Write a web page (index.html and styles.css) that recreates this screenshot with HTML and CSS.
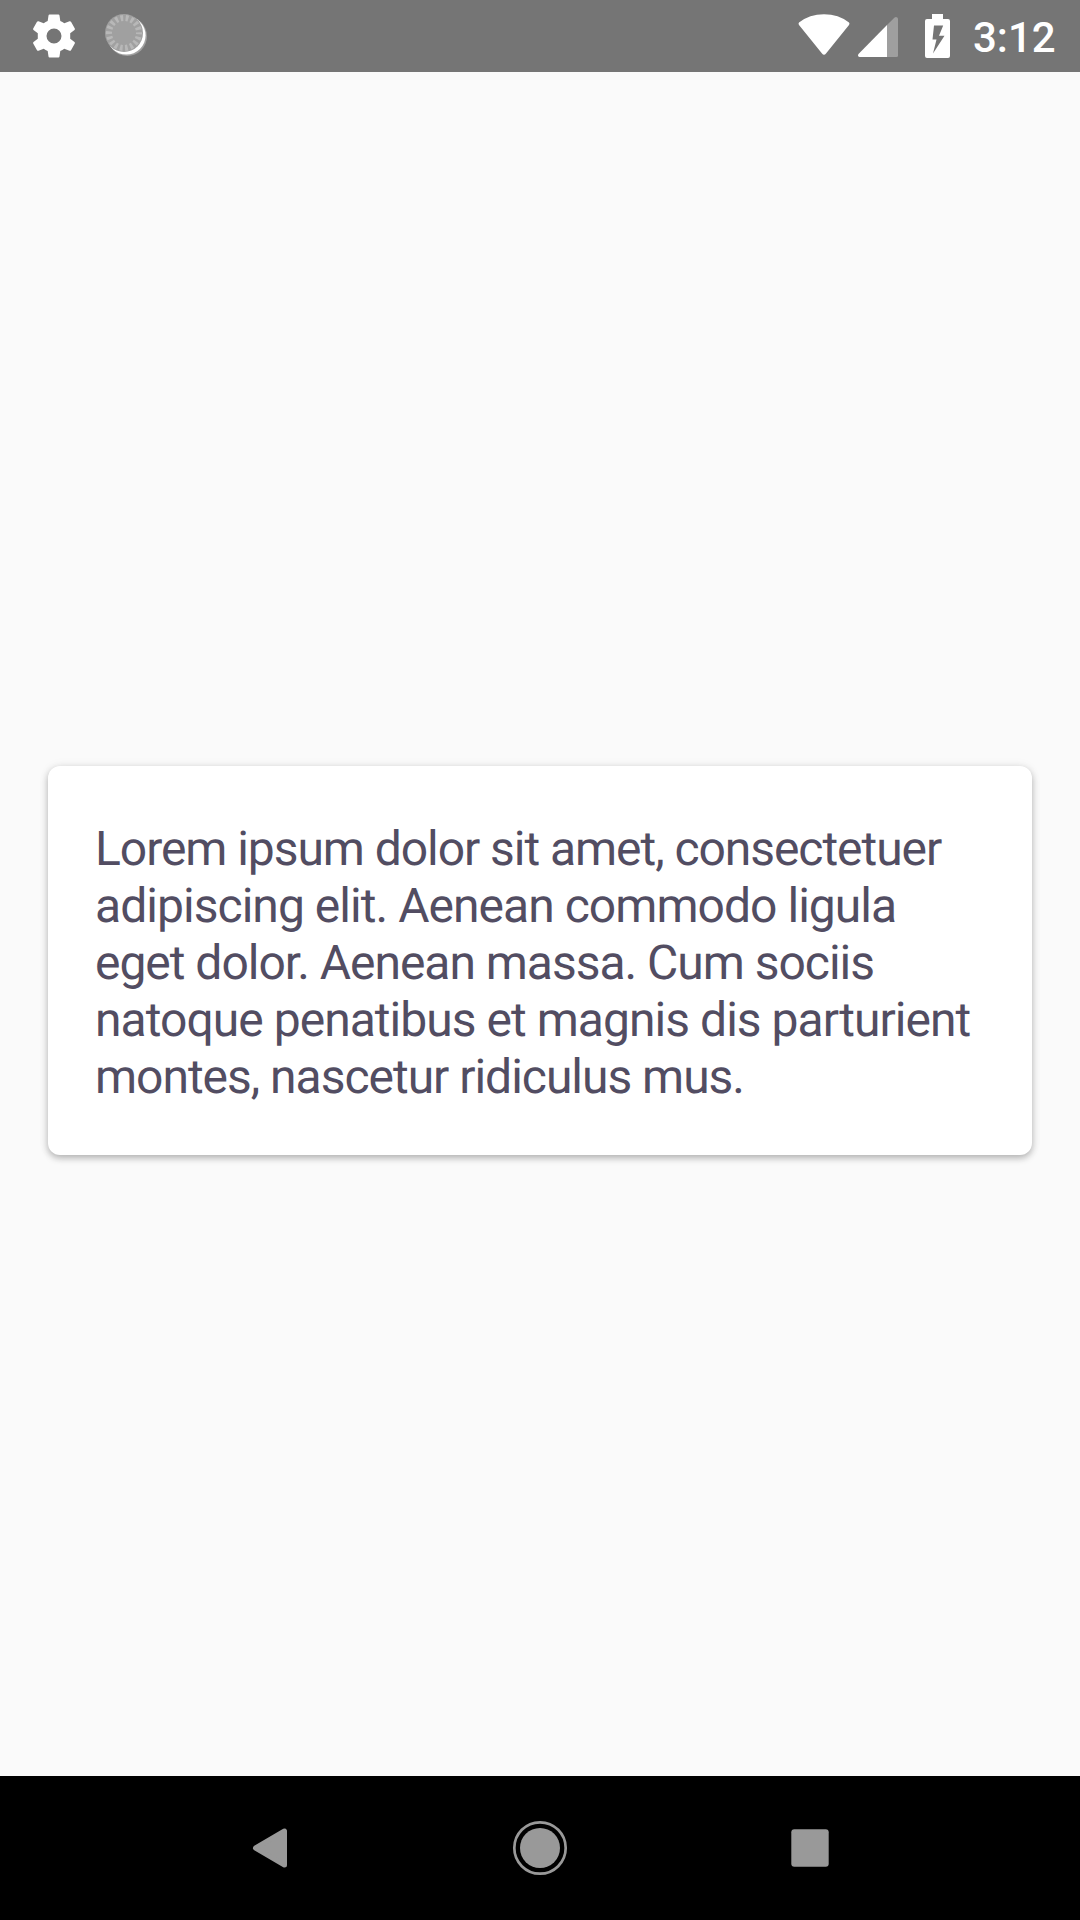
FILE: index.html

```html
<!DOCTYPE html>
<html lang="en">
<head>
<meta charset="utf-8">
<title>Card</title>
<link rel="stylesheet" href="styles.css">
</head>
<body>
<div class="screen">
  <header class="status">
    <div class="notifications">
      <svg class="gear" viewBox="0 0 52 52"><path fill="#fff" fill-rule="evenodd" d="M21.500 4.500H30.500Q31.300 4.500 31.500 5.500L32.300 11Q34.500 12 36.300 13.300L41.500 11.200Q42.500 11 43 11.700L46.800 18.500Q47.200 19.400 46.500 20L42.200 23.300V28.700L46.500 32Q47.200 32.600 46.800 33.500L43 40.300Q42.500 41 41.500 40.800L36.300 38.700Q34.500 40 32.300 41L31.500 46.500Q31.300 47.500 30.500 47.500H21.500Q20.700 47.500 20.500 46.500L19.700 41Q17.500 40 15.700 38.700L10.500 40.800Q9.500 41 9 40.300L5.200 33.500Q4.800 32.600 5.500 32L9.800 28.700V23.300L5.500 20Q4.800 19.400 5.200 18.500L9 11.700Q9.500 11 10.500 11.200L15.700 13.300Q17.500 12 19.700 11L20.500 5.500Q20.700 4.500 21.500 4.500zM26 18.500a7.500 7.500 0 1 0 0 15 7.500 7.500 0 0 0 0-15z"/></svg>
      <svg class="spinner" viewBox="0 0 44 44">
        <circle cx="23.300" cy="23.300" r="19.700" fill="#a0a0a0"/>
        <circle cx="22.300" cy="22.300" r="19.300" fill="#fff"/>
        <circle cx="20" cy="20" r="19" fill="#a0a0a0"/>
        <circle cx="20" cy="20" r="15" fill="none" stroke="#b8b8b8" stroke-width="6" stroke-dasharray="2.700 2.536" stroke-dashoffset="1.350"/>
      </svg>
    </div>
    <div class="system">
      <svg class="wifi" viewBox="0 0 52 42"><path fill="#fff" d="M1 8.500Q11.500.3 26 .3T51 8.500Q52 9.600 51 11L28 39.500Q26 42 24 39.500L1 11Q0 9.600 1 8.500z"/></svg>
      <svg class="signal" viewBox="0 0 40 40"><path fill="#9f9f9f" d="M29 8 36.600.6Q38-.5 39.300.6 40 1.200 40 2V38.500Q40 40 38.500 40H29z"/><path fill="#fff" d="M29 8V40H1.500Q-.8 39.500.5 37z"/></svg>
      <svg class="battery" viewBox="0 0 25 44"><path fill="#fff" fill-rule="evenodd" d="M7 0H18V5H23Q25 5 25 7V42Q25 44 23 44H2Q0 44 0 42V7Q0 5 2 5H7zM9 11.500 7.500 25.500H11.500L8 39.500 19.500 21.800H14L18.200 11.500z"/></svg>
      <span class="clock">3:12</span>
    </div>
  </header>
  <main class="content">
    <section class="card">
      <p class="text"><span class="tighter">Lorem ipsum dolor sit amet, consectetuer</span><br>adipiscing elit. Aenean commodo ligula<br><span class="tight">eget dolor. Aenean massa. Cum sociis</span><br>natoque penatibus et magnis dis parturient<br><span class="tight">montes, nascetur ridiculus mus.</span></p>
    </section>
  </main>
  <nav class="navbar">
    <svg class="nav-icon" viewBox="0 0 60 60"><path fill="#999" stroke="#999" stroke-width="5" stroke-linejoin="round" d="M15.500 30 44.500 13V47z"/></svg>
    <svg class="nav-icon" viewBox="0 0 60 60"><circle cx="30" cy="30" r="25.700" fill="none" stroke="#999" stroke-width="2.700"/><circle cx="30" cy="30" r="20" fill="#999"/></svg>
    <svg class="nav-icon" viewBox="0 0 60 60"><rect x="11.300" y="11.300" width="37.400" height="37.400" rx="3" fill="#999"/></svg>
  </nav>
</div>
</body>
</html>
```

FILE: styles.css

```css
body {
  margin: 0;
  font-family: Roboto, sans-serif;
}

.screen {
  display: flex;
  flex-direction: column;
  width: 1080px;
  height: 1920px;
  background: #fafafa;
}

.status {
  display: flex;
  justify-content: space-between;
  height: 72px;
  background: #757575;
}

.notifications {
  display: flex;
  align-items: flex-start;
  gap: 24px;
  padding: 10px 0 0 28px;
}

.gear {
  width: 52px;
  height: 52px;
}

.spinner {
  width: 44px;
  height: 44px;
  margin-top: 3px;
}

.system {
  display: flex;
  align-items: flex-start;
  padding: 14px 24px 0 0;
}

.wifi {
  width: 52px;
  height: 42px;
}

.signal {
  width: 40px;
  height: 40px;
  margin: 3px 27px 0 8px;
}

.battery {
  width: 25px;
  height: 44px;
}

.clock {
  width: 83px;
  margin-left: 23px;
  color: #fff;
  font-size: 42px;
  font-weight: 500;
  line-height: 47px;
  white-space: nowrap;
}

.content {
  display: flex;
  flex: 1;
  flex-direction: column;
  justify-content: center;
  padding: 73px 48px 0;
}

.card {
  padding: 54px 48px 50px 47px;
  border-radius: 12px;
  background: #fff;
  box-shadow: 0 3px 7px rgba(0, 0, 0, 0.28), 0 0 12px rgba(0, 0, 0, 0.05);
}

.text {
  margin: 0;
  color: #524d62;
  font-size: 48px;
  letter-spacing: -0.96px;
  line-height: 57px;
  text-rendering: geometricPrecision;
  white-space: nowrap;
}

.tight {
  letter-spacing: -1.02px;
}

.tighter {
  letter-spacing: -1.05px;
}

.navbar {
  display: flex;
  align-items: center;
  justify-content: center;
  gap: 210px;
  height: 144px;
  background: #000;
}

.nav-icon {
  width: 60px;
  height: 60px;
}
```
